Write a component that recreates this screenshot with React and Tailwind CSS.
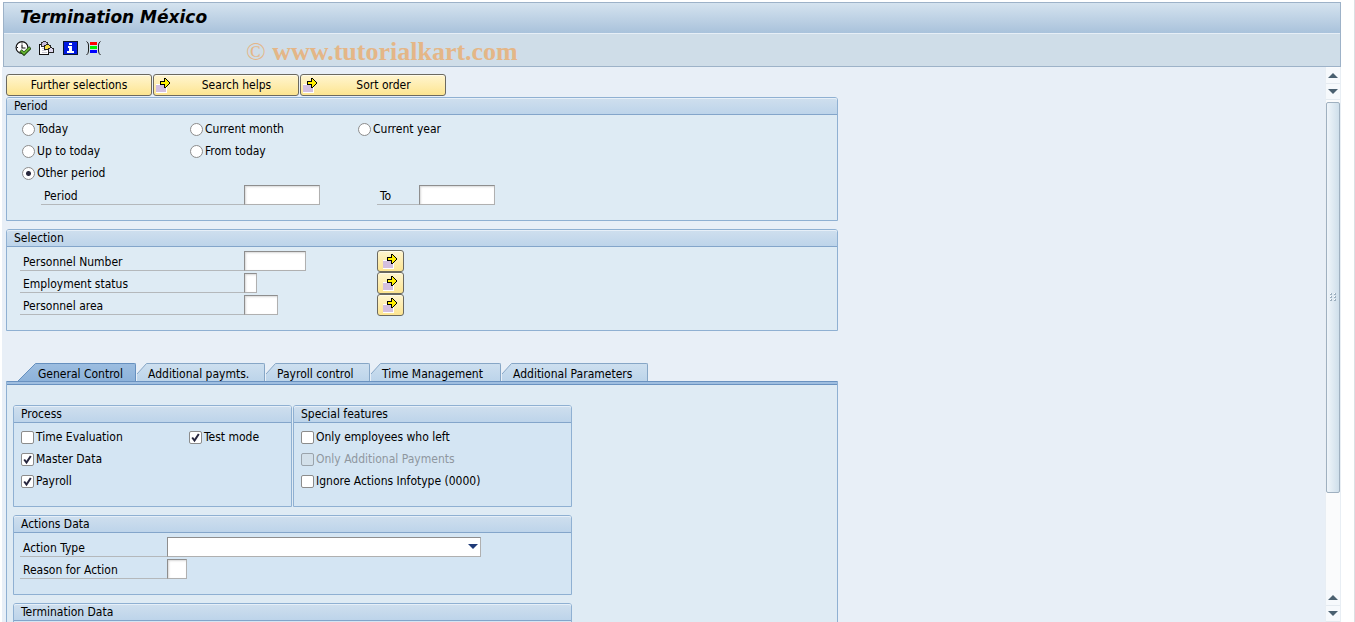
import React, { useState } from "react";

/* STATIC DATA */
const tabs = [
  { id: "general", label: "General Control", width: "w-[118px]" },
  { id: "paymts", label: "Additional paymts.", width: "w-32" },
  { id: "payroll", label: "Payroll control", width: "w-[104px]" },
  { id: "time", label: "Time Management", width: "w-[130px]" },
  { id: "params", label: "Additional Parameters", width: "w-[146px]" },
];

const periods = ["Today", "Current month", "Current year", "Up to today", "From today", "Other period"];

const selections = [
  { id: "pernr", label: "Personnel Number", width: "w-[62px]" },
  { id: "status", label: "Employment status", width: "w-[13px]" },
  { id: "area", label: "Personnel area", width: "w-[34px]" },
];

/* ICONS */
const ExecuteIcon = () => (
  <svg width="16" height="15" viewBox="0 0 16 15">
    <circle cx="7" cy="6.5" r="5.9" fill="#fff" stroke="#111" strokeWidth="1.2" />
    <path d="M7 1.5v1M7 10.5v1M2 6.5h1M7 3.5v3.5h3.5" fill="none" stroke="#111" strokeWidth="1.1" />
    <path d="M5.5 9.5l3.5 3.3L15.4 6.5" fill="none" stroke="#1c3d10" strokeWidth="3.4" />
    <path d="M6 9.7l3 2.7L14.8 6.8" fill="none" stroke="#62b22f" strokeWidth="1.9" />
  </svg>
);

const VariantIcon = () => (
  <svg width="16" height="15" viewBox="0 0 16 15" shapeRendering="crispEdges">
    <path d="M0.5 3.5h9v10h-9z" fill="#fff" stroke="#111" />
    <path d="M2.5 1.5h1l1-1h2l1 1h1v4h-6z" fill="#c9bedd" stroke="#333" />
    <path d="M3 7h2M3 9h4M3 11h5" stroke="#c8c8d0" />
    <path d="M5.5 4.5h1l1-1h2l1 1h1v4h-6z" fill="#f5dc4a" stroke="#222" />
    <path d="M9.5 7.5h1l1-1h1l1 1h1v4h-5z" fill="#dcd6ec" stroke="#222" />
  </svg>
);

const InfoIcon = () => (
  <svg width="15" height="15" viewBox="0 0 15 15" shapeRendering="crispEdges">
    <rect width="15" height="14" fill="#0a1430" />
    <rect x="1" y="1" width="13" height="12" fill="#0018e0" />
    <path d="M6 2h3v2H6zM5 5h4v5h2v2H4v-2h2V7H5z" fill="#fff" />
  </svg>
);

const LayoutIcon = () => (
  <svg width="15" height="15" viewBox="0 0 15 15">
    <path d="M0.5 0.5Q2.5 1.5 2.5 4v6q0 2.5-2 4M14.5 0.5Q12.5 1.5 12.5 4v6q0 2.5 2 4" fill="none" stroke="#222" />
    <rect x="4" y="1" width="7" height="3" fill="#f00" />
    <rect x="4" y="5" width="7" height="3" fill="#0e0" />
    <rect x="4" y="9" width="7" height="3" fill="#00f" />
  </svg>
);

const ArrowIcon = () => (
  <svg width="15" height="15" viewBox="0 0 15 15" shapeRendering="crispEdges" className="shrink-0">
    <rect x="0" y="6" width="11" height="9" fill="#fff" />
    <rect x="0" y="7" width="10" height="7" fill="#d3bfdf" />
    <path d="M4.5 3.5h4v-3h1l4.5 4.5-4.5 4.5h-1v-3h-4z" fill="#ffee00" stroke="#000" />
  </svg>
);

const Triangle = ({ up, color = "#4a6070" }) => (
  <svg width="10" height="5" viewBox="0 0 10 5">
    <path d={up ? "M0 5L5 0l5 5z" : "M0 0h10L5 5z"} fill={color} />
  </svg>
);

/* Left slope of a tab */
const TabSlope = ({ active }) => {
  const id = active ? "slopeActive" : "slope";
  const w = active ? 18 : 10;
  return (
    <svg width={w} height="18" viewBox={`0 0 ${w} 18`} className="shrink-0">
      <defs>
        <linearGradient id={id} x1="0" y1="0" x2="0" y2="1">
          <stop offset="0" stopColor={active ? "#9cbde0" : "#cddfef"} />
          <stop offset="1" stopColor={active ? "#8db2da" : "#bcd4ea"} />
        </linearGradient>
      </defs>
      <path d={active ? "M0 18L18 0v18z" : "M0 11L10 0v18H0z"} fill={`url(#${id})`} />
      <path
        d={active ? "M0 18L17.5 0.5h1" : "M0 11L9.5 0.5h1"}
        fill="none"
        stroke={active ? "#6690bf" : "#86a6c6"}
      />
    </svg>
  );
};

/* SHARED PARTS */
const Group = ({ title, className = "", children }) => (
  <section className={`rounded-t-[3px] border border-[#8fb0d2] ${className}`}>
    <h2 className="h-[17px] rounded-t-[2px] border-b border-[#83a5ca] bg-linear-to-b from-[#cfdfee] to-[#bdd4ea] pl-[7px] leading-4 shadow-[inset_0_1px_0_#e6eff8]">
      {title}
    </h2>
    <div className="pt-[3px]">{children}</div>
  </section>
);

const YellowButton = ({ children, className = "", ...props }) => (
  <button
    type="button"
    className={`flex h-[22px] items-center rounded-[3px] border border-[#6b6960] bg-linear-to-b from-[#fff5cf] to-[#fde590] shadow-[inset_0_1px_0_#fffbea] ${className}`}
    {...props}
  >
    {children}
  </button>
);

const Field = ({ className = "", ...props }) => (
  <input
    type="text"
    className={`h-5 border border-[#b0b0b0] border-t-[#8e8e8e] border-l-[#8e8e8e] bg-white px-1 shadow-[inset_1px_1px_2px_#d8d8d8] outline-none ${className}`}
    {...props}
  />
);

const FieldLabel = ({ className = "", ...props }) => (
  <label className={`h-5 border-b border-[#b4b8bb] pl-[3px] leading-[22px] ${className}`} {...props} />
);

const Check = ({ label, disabled, defaultChecked }) => (
  <label className={`flex h-[22px] items-center gap-0.5 ${disabled ? "text-[#8f979f]" : ""}`}>
    <span className="relative flex">
      <input
        type="checkbox"
        disabled={disabled}
        defaultChecked={defaultChecked}
        className="peer size-[13px] appearance-none rounded-[2px] border border-[#8c8c8c] bg-white disabled:border-[#9aa3ab] disabled:bg-[#d3e0ea]"
      />
      <svg
        width="13"
        height="13"
        viewBox="0 0 13 13"
        className="pointer-events-none absolute inset-0 hidden peer-checked:block"
      >
        <path d="M3.2 6.5l2.3 3L9.8 3" fill="none" stroke="#26263e" strokeWidth="2" />
      </svg>
    </span>
    {label}
  </label>
);

/* SCROLLBAR */
const ScrollButton = ({ up, label }) => (
  <button
    type="button"
    aria-label={label}
    className="flex h-4 items-center justify-center border-b border-[#e4eaf0] bg-[#f6f9fc]"
  >
    <Triangle up={up} />
  </button>
);

const Scrollbar = () => (
  <div className="flex w-4 shrink-0 flex-col border-x border-[#e8eef4] bg-[#fafbfc] pt-px">
    <ScrollButton up label="Scroll up" />
    <ScrollButton label="Scroll down" />
    <div className="mt-0.5 flex flex-4 items-center justify-center rounded-[2px] border border-[#9fb0c0] bg-linear-to-r from-[#eff5fa] to-[#cfdfeb]">
      <svg width="7" height="8" viewBox="0 0 7 8" shapeRendering="crispEdges">
        <path d="M0 0h2v2H0zM4 0h2v2H4zM0 3h2v2H0zM4 3h2v2H4zM0 6h2v2H0zM4 6h2v2H4z" fill="#fff" />
        <path d="M1 0h1v2H0V1h1zM5 0h1v2H4V1h1zM1 3h1v2H0V4h1zM5 3h1v2H4V4h1zM1 6h1v2H0V7h1zM5 6h1v2H4V7h1z" fill="#9db0c0" />
      </svg>
    </div>
    <div className="flex-1" />
    <ScrollButton up label="Page up" />
    <ScrollButton label="Page down" />
  </div>
);

/* MAIN COMPONENT */
const App = () => {
  const [period, setPeriod] = useState("Other period");
  const [activeTab, setActiveTab] = useState("general");

  return (
    <div className="flex h-screen flex-col overflow-hidden border-r border-[#dcdfe3] bg-white pr-[13px] pt-0.5 pl-0.5 font-['DejaVu_Sans_Condensed','DejaVu_Sans',sans-serif] text-[12px] text-black">
      {/* HEADER */}
      <header className="ml-px border border-[#9db2c8] bg-[#cfdde8]">
        <h1 className="h-[30px] bg-linear-to-b from-[#d5e3ef] to-[#a9c2db] pl-4 font-['DejaVu_Sans',sans-serif] text-[17px] leading-7 font-bold italic">
          Termination México
        </h1>
        <div className="flex h-[33px] items-start border-t border-[#e6eef6] pl-[11px]">
          <div className="flex gap-2 pt-[7px]">
            <button type="button" aria-label="Execute"><ExecuteIcon /></button>
            <button type="button" aria-label="Get variant"><VariantIcon /></button>
            <button type="button" aria-label="Information"><InfoIcon /></button>
            <button type="button" aria-label="Layout"><LayoutIcon /></button>
          </div>
          <p className="ml-[145px] pt-0.5 font-['Liberation_Serif',serif] text-[26px] leading-8 font-bold text-[#e4b687]">
            <span className="font-normal">©</span> www.tutorialkart.com
          </p>
        </div>
      </header>

      <div className="flex min-h-0 flex-1">
        <main className="min-w-0 flex-1 overflow-hidden bg-[#e8eff7] pt-[7px] pl-1">
          <div className="flex gap-px">
            <YellowButton className="w-[146px] justify-center">Further selections</YellowButton>
            <YellowButton className="w-[146px] pl-0.5">
              <ArrowIcon />
              <span className="flex-1 pl-1">Search helps</span>
            </YellowButton>
            <YellowButton className="w-[146px] pl-0.5">
              <ArrowIcon />
              <span className="flex-1 pl-1">Sort order</span>
            </YellowButton>
          </div>

          <div className="w-[832px] max-w-full">
            {/* PERIOD */}
            <Group title="Period" className="mt-px bg-[#deebf4] pb-3.5">
              <div className="grid grid-cols-[168px_168px_168px] pl-[15px]">
                {periods.map((p) => (
                  <label
                    key={p}
                    className={`flex h-[22px] items-center gap-0.5 ${p === "Other period" ? "col-start-1" : ""} ${p === "Up to today" ? "col-start-1" : ""}`}
                  >
                    <input
                      type="radio"
                      name="period"
                      checked={period === p}
                      onChange={() => setPeriod(p)}
                      className="size-[13px] appearance-none rounded-full border border-[#8c8c8c] bg-white checked:bg-[radial-gradient(circle,#2a2a3e_0_2px,#fff_3px)]"
                    />
                    {p}
                  </label>
                ))}
              </div>
              <div className="flex h-[22px] items-center pl-[34px]">
                <FieldLabel htmlFor="from" className="w-[203px]">Period</FieldLabel>
                <Field id="from" className="w-[76px]" />
                <FieldLabel htmlFor="to" className="ml-[57px] w-[42px]">To</FieldLabel>
                <Field id="to" className="w-[76px]" />
              </div>
            </Group>

            {/* SELECTION */}
            <Group title="Selection" className="mt-2 bg-[#deebf4] pb-3.5">
              {selections.map((s) => (
                <div key={s.id} className="flex h-[22px] items-center pl-[13px]">
                  <FieldLabel htmlFor={s.id} className="w-[224px]">{s.label}</FieldLabel>
                  <div className="flex w-[133px]">
                    <Field id={s.id} className={s.width} />
                  </div>
                  <YellowButton className="w-[27px] justify-center" aria-label={`Multiple selection ${s.label}`}>
                    <ArrowIcon />
                  </YellowButton>
                </div>
              ))}
            </Group>

            {/* TABS */}
            <div role="tablist" className="mt-8 flex gap-px pl-3">
              {tabs.map((t) => {
                const active = t.id === activeTab;
                return (
                  <button
                    key={t.id}
                    type="button"
                    role="tab"
                    aria-selected={active}
                    onClick={() => setActiveTab(t.id)}
                    className={`flex h-[18px] ${t.width}`}
                  >
                    <TabSlope active={active} />
                    <span
                      className={`h-full flex-1 rounded-tr-[2px] border-t border-r text-left leading-5 whitespace-nowrap ${
                        active
                          ? "border-[#6690bf] bg-linear-to-b from-[#9cbde0] to-[#8db2da] pl-0.5"
                          : "border-[#86a6c6] bg-linear-to-b from-[#cddfef] to-[#bcd4ea] pl-px"
                      }`}
                    >
                      {t.label}
                    </span>
                  </button>
                );
              })}
            </div>

            <div role="tabpanel" className="border-x border-[#8fb0d2] bg-[#dfebf4]">
              <div className="h-1 border-y border-[#6a92c0] bg-[#9fbee0]" />
              <div className="w-[565px] pt-5 pl-1.5">
                <div className="flex gap-px">
                  <Group title="Process" className="flex-1 bg-[#d4e5f3] pb-3.5">
                    <div className="grid grid-cols-[168px_auto] pl-[7px]">
                      <Check label="Time Evaluation" />
                      <Check label="Test mode" defaultChecked />
                      <Check label="Master Data" defaultChecked />
                      <span />
                      <Check label="Payroll" defaultChecked />
                    </div>
                  </Group>
                  <Group title="Special features" className="flex-1 bg-[#d4e5f3] pb-3.5">
                    <div className="pl-[7px]">
                      <Check label="Only employees who left" />
                      <Check label="Only Additional Payments" disabled />
                      <Check label="Ignore Actions Infotype (0000)" />
                    </div>
                  </Group>
                </div>

                <Group title="Actions Data" className="mt-2 bg-[#d4e5f3] pb-3.5">
                  <div className="flex h-[22px] items-center pl-1.5">
                    <FieldLabel htmlFor="action" className="w-[147px]">Action Type</FieldLabel>
                    <div className="relative flex w-[314px]">
                      <select
                        id="action"
                        className="h-5 w-full appearance-none border border-[#b0b0b0] border-t-[#8e8e8e] border-l-[#8e8e8e] bg-white px-1 outline-none"
                      >
                        <option></option>
                      </select>
                      <span className="pointer-events-none absolute top-[7px] right-[3px]">
                        <Triangle color="#1f3a78" />
                      </span>
                    </div>
                  </div>
                  <div className="flex h-[22px] items-center pl-1.5">
                    <FieldLabel htmlFor="reason" className="w-[147px]">Reason for Action</FieldLabel>
                    <Field id="reason" className="w-5" />
                  </div>
                </Group>

                <Group title="Termination Data" className="mt-2 bg-[#d4e5f3] pb-3.5" />
              </div>
            </div>
          </div>
        </main>
        <Scrollbar />
      </div>
    </div>
  );
};

export default App;
